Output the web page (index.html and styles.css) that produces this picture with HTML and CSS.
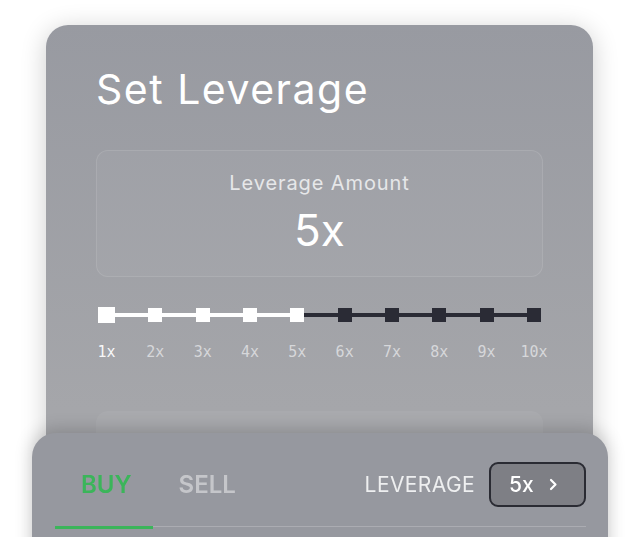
FILE: index.html
```html
<!DOCTYPE html>
<html lang="en">
<head>
  <meta charset="UTF-8">
  <meta name="viewport" content="width=device-width, initial-scale=1.0">
  <title>Set Leverage</title>
  <link rel="stylesheet" href="styles.css">
</head>
<body>
  <div class="page">
    <div class="modal">
      <h2 class="modal-title">Set Leverage</h2>

      <div class="amount-box">
        <div class="amount-label">Leverage Amount</div>
        <div class="amount-value">5x</div>
      </div>

      <div class="steps">
        <div class="step active first"><span class="dot"></span><span class="step-label">1x</span></div>
        <span class="seg on"></span>
        <div class="step on"><span class="dot"></span><span class="step-label">2x</span></div>
        <span class="seg on"></span>
        <div class="step on"><span class="dot"></span><span class="step-label">3x</span></div>
        <span class="seg on"></span>
        <div class="step on"><span class="dot"></span><span class="step-label">4x</span></div>
        <span class="seg on"></span>
        <div class="step on"><span class="dot"></span><span class="step-label">5x</span></div>
        <span class="seg"></span>
        <div class="step"><span class="dot"></span><span class="step-label">6x</span></div>
        <span class="seg"></span>
        <div class="step"><span class="dot"></span><span class="step-label">7x</span></div>
        <span class="seg"></span>
        <div class="step"><span class="dot"></span><span class="step-label">8x</span></div>
        <span class="seg"></span>
        <div class="step"><span class="dot"></span><span class="step-label">9x</span></div>
        <span class="seg"></span>
        <div class="step"><span class="dot"></span><span class="step-label">10x</span></div>
      </div>

      <div class="info-box"></div>
    </div>
  </div>

  <div class="trade-panel">
    <div class="trade-head">
      <div class="tabs">
        <span class="tab active">BUY</span>
        <span class="tab">SELL</span>
      </div>
      <div class="lev">
        <span class="lev-label">LEVERAGE</span>
        <button class="lev-btn">5x
          <svg width="9" height="13" viewBox="0 0 9 13"><path d="M2 2l4.5 4.5L2 11" fill="none" stroke="#fff" stroke-width="2.2" stroke-linecap="round" stroke-linejoin="round"/></svg>
        </button>
      </div>
    </div>
    <div class="tab-line"><span class="tab-line-active"></span></div>
  </div>
</body>
</html>
```

FILE: styles.css
```css
body {
  margin: 0;
  background: #fff;
  font-family: Inter, "Noto Sans", sans-serif;
  overflow: hidden;
  height: 537px;
}
.page {
  padding-top: 25px;
}
.modal {
  margin: 0 47px 0 46px;
  padding: 39px 50px 0;
  height: 600px;
  background: linear-gradient(#989aa1, #a5a6aa 60%);
  border-radius: 22px;
  box-shadow: 0 4px 26px rgba(0, 0, 0, 0.2);
}
.modal-title {
  margin: 0;
  font-size: 41px;
  line-height: 50px;
  font-weight: 400;
  color: #fff;
  letter-spacing: 1.5px;
}
.amount-box {
  margin-top: 36px;
  height: 125px;
  border: 1px solid rgba(255, 255, 255, 0.1);
  border-radius: 12px;
  background: rgba(255, 255, 255, 0.04);
  text-align: center;
  color: #fff;
}
.amount-label {
  margin-top: 18px;
  font-size: 20px;
  line-height: 28px;
  letter-spacing: 0.9px;
  color: #e6e7e9;
}
.amount-value {
  margin-top: 8px;
  font-size: 44px;
  line-height: 50px;
}
.steps {
  display: flex;
  align-items: flex-start;
  margin: 30px 2px 0;
}
.step {
  display: flex;
  flex-direction: column;
  align-items: center;
  width: 14px;
}
.step .dot {
  width: 14px;
  height: 14px;
  margin: 1px 0;
  background: #2a2b35;
}
.step.on .dot {
  background: #fff;
}
.step.first {
  width: 17px;
}
.step.first .dot {
  width: 17px;
  height: 16px;
  margin: 0;
  background: #fff;
}
.seg {
  flex: 1;
  height: 4px;
  margin-top: 6px;
  background: #2a2b35;
}
.seg.on {
  background: #fff;
}
.step-label {
  margin-top: 20px;
  font-family: "DejaVu Sans Mono", monospace;
  font-size: 15px;
  line-height: 18px;
  color: #d6d7da;
  white-space: nowrap;
}
.step.active .step-label {
  color: #f7f7f8;
}
.info-box {
  margin-top: 50px;
  height: 80px;
  border-radius: 12px;
  background: rgba(255, 255, 255, 0.05);
}
.trade-panel {
  position: fixed;
  top: 433px;
  left: 32px;
  right: 32px;
  height: 140px;
  padding: 0 22px 0 23px;
  background: #96989f;
  border-radius: 24px 24px 0 0;
  box-shadow: 0 -3px 18px rgba(0, 0, 0, 0.2);
}
.trade-head {
  display: flex;
  align-items: center;
  justify-content: space-between;
  height: 85px;
  padding-top: 9px;
}
.tabs {
  display: flex;
  gap: 47px;
  padding-left: 26px;
}
.tab {
  font-size: 24px;
  font-weight: 600;
  color: #c5c6ca;
}
.tab.active {
  color: #3bb55a;
}
.lev {
  display: flex;
  align-items: center;
  gap: 14px;
}
.lev-label {
  font-size: 21px;
  letter-spacing: 0.4px;
  color: #eeeff0;
}
.lev-btn {
  display: flex;
  align-items: center;
  gap: 15px;
  width: 97px;
  height: 45px;
  padding: 0 0 0 18px;
  border: 2px solid #2a2b33;
  border-radius: 9px;
  background: #7e7f85;
  color: #fff;
  font-family: Inter, sans-serif;
  font-size: 21px;
  font-weight: 500;
}
.tab-line {
  height: 1px;
  background: rgba(255, 255, 255, 0.2);
}
.tab-line-active {
  display: block;
  width: 98px;
  height: 3px;
  margin-top: -1px;
  background: #3bb55a;
}
```
